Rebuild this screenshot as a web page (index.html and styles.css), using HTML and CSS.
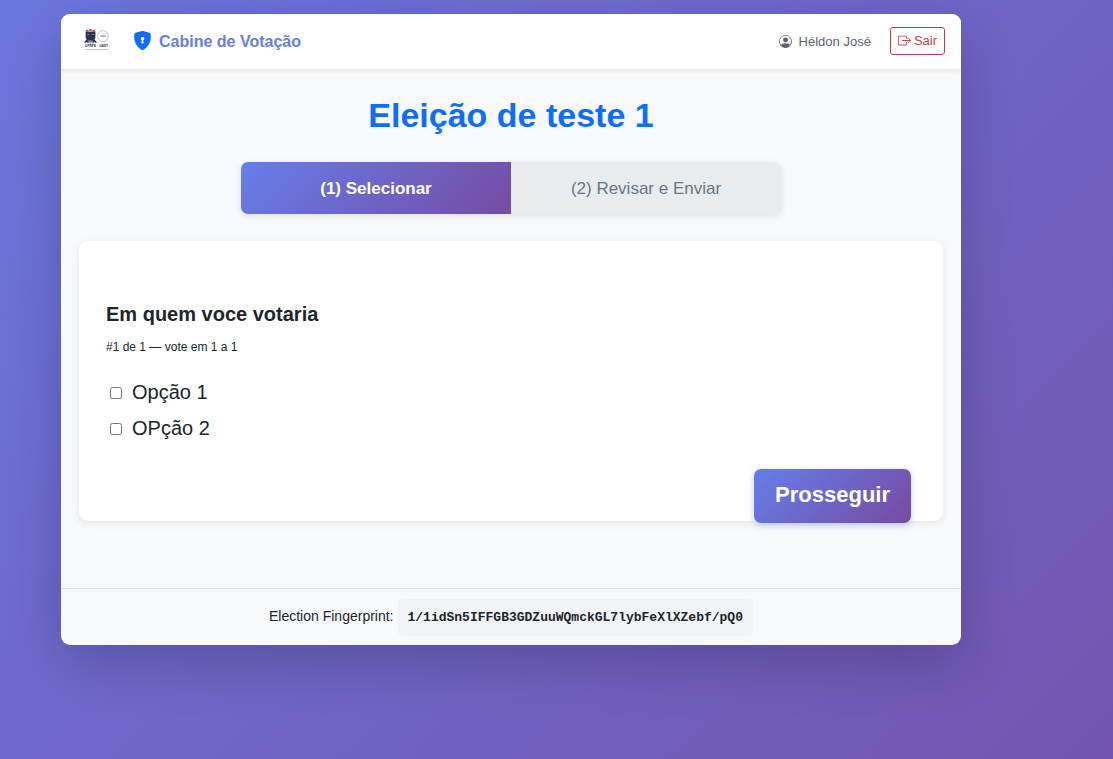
FILE: index.html
```html
<!DOCTYPE html>
<html lang="pt-BR">
<head>
<meta charset="utf-8">
<meta name="viewport" content="width=device-width, initial-scale=1">
<title>Cabine de Votação</title>
<link rel="stylesheet" href="styles.css">
</head>
<body>
<div class="booth">
  <header class="topbar">
    <svg class="logo" viewBox="0 0 24 22" role="img" aria-label="UFRPE UAST">
      <path d="M1.500 2.500L2 .5h2l.5 2zM4.700 2L5 0h2l.3 2zM7.500 2.500L8 .5h2l.5 2z" fill="#a9564f"/>
      <path d="M1.500 2.500h9V7c0 2-1 3-2 3.500h-5C2.500 10 1.500 9 1.500 7z" fill="#273350"/>
      <path d="M3 4.500h2v1H3zM7 4.500h2v1H7z" fill="#77809a"/>
      <path d="M.5 11.500l2-2L4 10.500h4l1.500-1 2 2V13L9.500 12 8 13H4l-1.500-1L.5 13z" fill="#273350"/>
      <path d="M4 12h4" stroke="#e3e5ea"/>
      <circle cx="17.500" cy="6.500" r="5" fill="#fff" stroke="#b4b9c0" stroke-width=".8"/>
      <path d="M15 6.500h5" stroke="#7c838c" stroke-width="1.300"/>
      <path d="M15 4.300h5" stroke="#d5d8dc" stroke-width=".8"/>
      <text class="logo-text" x="1" y="17">UFRPE</text>
      <text class="logo-text" x="14" y="17">UAST</text>
      <path d="M1 18.800h22" stroke="#c3c7cd"/>
    </svg>
    <a class="brand" href="#">
      <svg class="brand-icon" viewBox="0 0 16 16" fill="currentColor" aria-hidden="true"><path fill-rule="evenodd" d="M8 0c-.69 0-1.843.265-2.928.56-1.11.3-2.229.655-2.887.87a1.540 1.540 0 0 0-1.044 1.262c-.596 4.477.787 7.795 2.465 9.990a11.777 11.777 0 0 0 2.517 2.453c.386.273.744.482 1.048.625.28.132.581.24.829.24s.548-.108.829-.24a7.159 7.159 0 0 0 1.048-.625 11.775 11.775 0 0 0 2.517-2.453c1.678-2.195 3.061-5.513 2.465-9.990a1.541 1.541 0 0 0-1.044-1.263 62.467 62.467 0 0 0-2.887-.87C9.843.266 8.690 0 8 0zm0 5a1.500 1.500 0 0 1 .5 2.915l.385 1.990a.5.5 0 0 1-.491.595h-.788a.5.5 0 0 1-.49-.595l.384-1.990A1.500 1.500 0 0 1 8 5z"/></svg>
      <span class="brand-name">Cabine de Votação</span>
    </a>
    <div class="user">
      <svg class="icon" viewBox="0 0 16 16" fill="currentColor" aria-hidden="true"><path d="M11 6a3 3 0 1 1-6 0 3 3 0 0 1 6 0z"/><path fill-rule="evenodd" d="M0 8a8 8 0 1 1 16 0A8 8 0 0 1 0 8zm8-7a7 7 0 0 0-5.468 11.370C3.242 11.226 4.805 10 8 10s4.757 1.225 5.468 2.370A7 7 0 0 0 8 1z"/></svg>
      <span>Héldon José</span>
    </div>
    <button class="logout" type="button">
      <svg class="icon" viewBox="0 0 16 16" fill="currentColor" aria-hidden="true"><path fill-rule="evenodd" d="M10 12.500a.5.5 0 0 1-.5.5h-8a.5.5 0 0 1-.5-.5v-9a.5.5 0 0 1 .5-.5h8a.5.5 0 0 1 .5.5v2a.5.5 0 0 0 1 0v-2A1.500 1.500 0 0 0 9.500 2h-8A1.500 1.500 0 0 0 0 3.500v9A1.500 1.500 0 0 0 1.500 14h8a1.500 1.500 0 0 0 1.500-1.500v-2a.5.5 0 0 0-1 0v2z"/><path fill-rule="evenodd" d="M15.854 8.354a.5.5 0 0 0 0-.708l-3-3a.5.5 0 0 0-.708.708L14.293 7.500H5.500a.5.5 0 0 0 0 1h8.793l-2.147 2.146a.5.5 0 0 0 .708.708l3-3z"/></svg>
      <span>Sair</span>
    </button>
  </header>

  <main class="content">
    <h1 class="title">Eleição de teste 1</h1>
    <ol class="steps">
      <li class="step step-active" aria-current="step">(1) Selecionar</li>
      <li class="step">(2) Revisar e Enviar</li>
    </ol>
    <form class="card">
      <h2 class="question">Em quem voce votaria</h2>
      <p class="hint">#1 de 1 — vote em 1 a 1</p>
      <div class="options">
        <label class="option" for="opt1"><input class="check" type="checkbox" id="opt1"><span>Opção 1</span></label>
        <label class="option" for="opt2"><input class="check" type="checkbox" id="opt2"><span>OPção 2</span></label>
      </div>
      <button class="proceed" type="button">Prosseguir</button>
    </form>
  </main>

  <footer class="footer">
    <span>Election Fingerprint:</span>
    <code class="fingerprint">1/1idSn5IFFGB3GDZuuWQmckGL7lybFeXlXZebf/pQ0</code>
  </footer>
</div>
</body>
</html>
```
FILE: styles.css
```css
* {
  box-sizing: border-box;
}

body {
  min-height: 100vh;
  margin: 0;
  padding: 14px 61px;
  background: linear-gradient(135deg, #6b76dd, #7355b0);
  font-family: "Liberation Sans", Arial, sans-serif;
  color: #212529;
}

.booth {
  max-width: 900px;
  background: #f8f9fb;
  border-radius: 9px;
  box-shadow: 0 18px 54px rgba(0, 0, 0, 0.2);
  overflow: hidden;
}

.topbar {
  display: flex;
  align-items: center;
  padding: 13px 16px 14px 23px;
  background: #fff;
  border-bottom: 1px solid #e9ecef;
  box-shadow: 0 2px 4px rgba(0, 0, 0, 0.06);
}

.logo {
  width: 26px;
  height: 24px;
  margin-right: 23px;
}

.logo-text {
  font-size: 3px;
  font-weight: bold;
  fill: #273350;
}

.brand {
  display: flex;
  align-items: flex-start;
  gap: 7px;
  margin-right: auto;
  color: #667eea;
  font-size: 16px;
  line-height: 18px;
  font-weight: bold;
  text-decoration: none;
}

.brand-icon {
  width: 19px;
  height: 19px;
  color: #0d6efd;
}

.brand-name {
  padding-top: 2px;
}

.user {
  display: flex;
  align-items: center;
  gap: 7px;
  margin-right: 19px;
  font-size: 13px;
  color: #5c636a;
}

.icon {
  width: 13px;
  height: 13px;
}

.logout {
  display: flex;
  align-items: center;
  gap: 3px;
  height: 28px;
  padding: 0 7px 1px;
  border: 1px solid #c43c4b;
  border-radius: 3px;
  background: #fff;
  color: #cf3c4b;
  font: 13px "Liberation Sans", Arial, sans-serif;
}

.content {
  padding: 24px 18px 67px;
}

.title {
  margin: 0 0 26px;
  font-size: 34px;
  line-height: 42px;
  text-align: center;
  color: #0d6efd;
}

.steps {
  display: flex;
  max-width: 540px;
  margin: 0 auto 27px;
  padding: 0;
  list-style: none;
  border-radius: 7px;
  overflow: hidden;
  background: #e9ecef;
  box-shadow: 0 2px 7px rgba(0, 0, 0, 0.1);
}

.step {
  flex: 1;
  padding: 15px 14px 13px;
  font-size: 17px;
  line-height: 24px;
  text-align: center;
  color: #6c757d;
}

.step-active {
  background: linear-gradient(135deg, #667eea, #764ba2);
  color: #fff;
  font-weight: bold;
}

.card {
  display: flex;
  flex-direction: column;
  padding: 61px 32px 0 27px;
  background: #fff;
  border-radius: 9px;
  box-shadow: 0 2px 9px rgba(0, 0, 0, 0.08);
}

.question {
  margin: 0 0 12px;
  font-size: 20px;
  line-height: 24px;
}

.hint {
  margin: 0 0 18px;
  font-size: 12px;
  line-height: 18px;
}

.options {
  margin-bottom: 23px;
}

.option {
  display: flex;
  align-items: center;
  gap: 10px;
  padding: 3px 4px;
  font-size: 20px;
  line-height: 30px;
}

.check {
  width: 12px;
  height: 12px;
  margin: 1px 0 0;
}

.proceed {
  align-self: flex-end;
  margin-bottom: -2px;
  padding: 12px 21px 14px;
  border: 0;
  border-radius: 7px;
  background: linear-gradient(135deg, #667eea, #764ba2);
  box-shadow: 0 2px 7px rgba(102, 126, 234, 0.4);
  color: #fff;
  font: bold 22px/28px "Liberation Sans", Arial, sans-serif;
}

.footer {
  display: flex;
  align-items: baseline;
  justify-content: center;
  gap: 4px;
  padding: 10px 18px 9px;
  border-top: 1px solid #dee2e6;
  font-size: 14px;
}

.fingerprint {
  padding: 10px;
  border-radius: 5px;
  background: #f1f3f5;
  font: bold 13px/17px "Liberation Mono", monospace;
}
```
